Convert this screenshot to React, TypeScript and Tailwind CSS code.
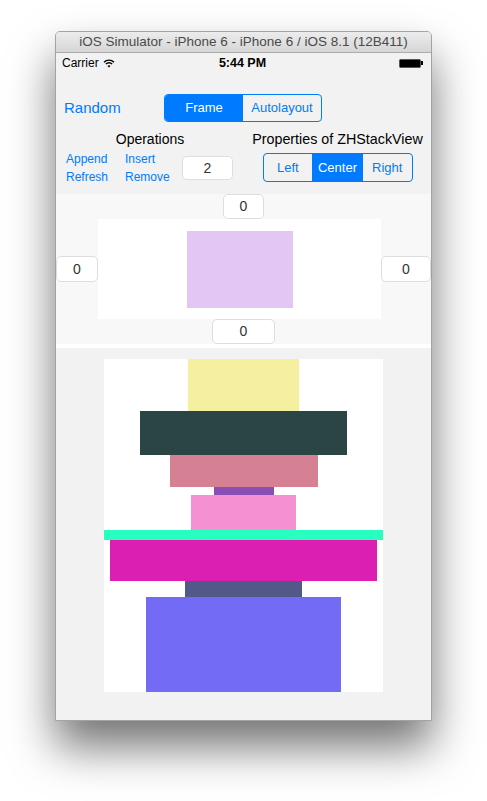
import React from 'react';

const SANS = { fontFamily: '"Liberation Sans", Arial, sans-serif' };

// Rectangles stacked inside the ZHStackView preview, top to bottom
const STACK = [
  { w: 111, h: 52, c: 'bg-[#f5efa0]' },
  { w: 207, h: 44, c: 'bg-[#2b4545]' },
  { w: 148, h: 32, c: 'bg-[#d58093]' },
  { w: 60, h: 8, c: 'bg-[#8b4fb3]' },
  { w: 105, h: 35, c: 'bg-[#f590d3]' },
  { w: 279, h: 10, c: 'bg-[#27ffc0]' },
  { w: 267, h: 41, c: 'bg-[#db1fb3]' },
  { w: 117, h: 16, c: 'bg-[#525888]' },
  { w: 195, h: 95, c: 'bg-[#736af5]' },
];

const Field = ({ value, className }: { value: string; className: string }) => (
  <div
    className={`flex items-center justify-center rounded-[5px] border border-[#dedede] bg-white text-[14px] text-[#333] ${className}`}
  >
    {value}
  </div>
);

const Wifi = () => (
  <svg width="12" height="9" viewBox="0 0 12 9" className="ml-[4px]">
    <path d="M1 3.2 A7 7 0 0 1 11 3.2" stroke="#000" strokeWidth="1.4" fill="none" />
    <path d="M2.9 5.1 A4.3 4.3 0 0 1 9.1 5.1" stroke="#000" strokeWidth="1.4" fill="none" />
    <path d="M6 8.6 L4.5 7 A2.1 2.1 0 0 1 7.5 7 Z" fill="#000" />
  </svg>
);

export default function App() {
  return (
    <div className="w-[487px] h-[801px] bg-white overflow-hidden pt-[31px] pl-[55px]" style={SANS}>
      <div className="w-[377px] rounded-t-[5px] border border-[#a3a3a3] bg-[#f2f2f2] shadow-[0_26px_45px_rgba(0,0,0,0.55)] overflow-hidden">
        {/* title bar */}
        <div className="h-[21px] flex items-center justify-center bg-gradient-to-b from-[#ececec] to-[#d6d6d6] border-b border-[#acacac] text-[13.5px] text-[#4a4a4a]">
          iOS Simulator - iPhone 6 - iPhone 6 / iOS 8.1 (12B411)
        </div>

        <div className="w-[375px] h-[667px] flex flex-col">
          {/* status bar */}
          <div className="h-[20px] flex items-center px-[6px] text-[12px] text-black">
            <div className="flex-1 flex items-center">
              Carrier
              <Wifi />
            </div>
            <div className="font-bold text-[12.5px]">5:44 PM</div>
            <div className="flex-1 flex justify-end items-center pr-[2px]">
              <div className="w-[22px] h-[9px] rounded-[1.5px] bg-black border border-[#555]" />
              <div className="w-[2px] h-[4px] bg-black" />
            </div>
          </div>

          {/* top row */}
          <div className="mt-[21px] h-[28px] flex items-center">
            <div className="w-[108px] pl-[8px] text-[15px] text-[#007aff]">Random</div>
            <div className="w-[158px] h-[28px] flex rounded-[4px] border border-[#007aff] overflow-hidden text-[13px]">
              <div className="flex-1 flex items-center justify-center bg-[#007aff] text-white">Frame</div>
              <div className="flex-1 flex items-center justify-center text-[#007aff]">Autolayout</div>
            </div>
          </div>

          {/* operations + properties */}
          <div className="h-[72px] flex pt-[8px]">
            <div className="w-[188px] flex flex-col">
              <div className="h-[18px] leading-[18px] text-center text-[14px] text-black">Operations</div>
              <div className="mt-[2px] flex text-[12px] leading-[18px] text-[#007aff]">
                <div className="w-[69px] pl-[10px] flex flex-col">
                  <span>Append</span>
                  <span>Refresh</span>
                </div>
                <div className="w-[57px] flex flex-col">
                  <span>Insert</span>
                  <span>Remove</span>
                </div>
                <Field value="2" className="mt-[6px] w-[51px] h-[24px]" />
              </div>
            </div>
            <div className="w-[187px] flex flex-col items-center">
              <div className="h-[18px] leading-[18px] text-[14.3px] text-black">Properties of ZHStackView</div>
              <div className="mt-[5px] w-[150px] h-[29px] flex rounded-[4px] border border-[#007aff] overflow-hidden text-[13px] text-[#007aff]">
                <div className="flex-1 flex items-center justify-center border-r border-[#007aff]">Left</div>
                <div className="flex-1 flex items-center justify-center bg-[#007aff] text-white">Center</div>
                <div className="flex-1 flex items-center justify-center border-l border-[#007aff]">Right</div>
              </div>
            </div>
          </div>

          {/* inset editor */}
          <div className="h-[150px] bg-[#f8f8f8] flex flex-col items-center">
            <Field value="0" className="w-[41px] h-[25px]" />
            <div className="w-full h-[100px] flex items-center">
              <Field value="0" className="w-[42px] h-[26px]" />
              <div className="w-[283px] h-[100px] bg-white flex items-center justify-center">
                <div className="w-[106px] h-[77px] bg-[#e4c6f5]" />
              </div>
              <Field value="0" className="w-[50px] h-[26px]" />
            </div>
            <Field value="0" className="w-[63px] h-[25px]" />
          </div>
          <div className="h-[4px] bg-white" />

          {/* stack preview */}
          <div className="mt-[11px] ml-[48px] w-[279px] h-[333px] bg-white flex flex-col items-center">
            {STACK.map((r, i) => (
              <div key={i} className={r.c} style={{ width: r.w, height: r.h }} />
            ))}
          </div>
        </div>
      </div>
    </div>
  );
}
